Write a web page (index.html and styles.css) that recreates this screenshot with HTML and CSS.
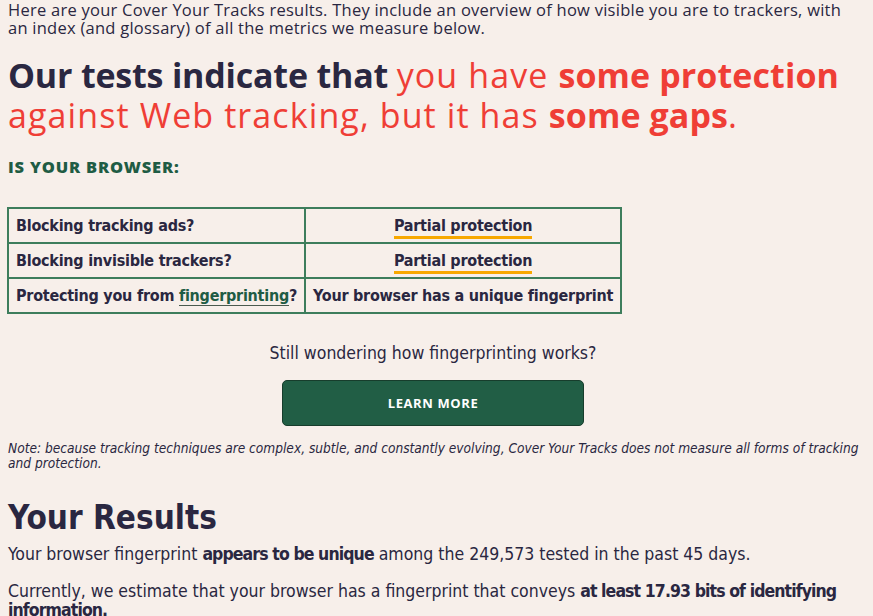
FILE: index.html
```html
<!DOCTYPE html>
<html lang="en">
<head>
<meta charset="utf-8">
<title>Cover Your Tracks</title>
<link rel="stylesheet" href="styles.css">
</head>
<body>
<main class="page">
  <p class="intro">Here are your Cover Your Tracks results. They include an overview of how visible you are to trackers, with an index (and glossary) of all the metrics we measure below.</p>
  <h1 class="verdict">Our tests indicate that <span class="red">you have <strong>some protection</strong> against Web tracking, but it has <strong>some gaps</strong>.</span></h1>
  <h3 class="kicker">IS YOUR BROWSER:</h3>
  <table class="summary">
    <tr><td class="q">Blocking tracking ads?</td><td class="a"><span class="partial">Partial protection</span></td></tr>
    <tr><td class="q">Blocking invisible trackers?</td><td class="a"><span class="partial">Partial protection</span></td></tr>
    <tr><td class="q">Protecting you from <a class="link" href="#">fingerprinting</a>?</td><td class="a">Your browser has a unique fingerprint</td></tr>
  </table>
  <div class="learn">
    <p class="wonder">Still wondering how fingerprinting works?</p>
    <a class="btn" href="#">LEARN MORE</a>
  </div>
  <p class="note">Note: because tracking techniques are complex, subtle, and constantly evolving, Cover Your Tracks does not measure all forms of tracking and protection.</p>
  <h2 class="results">Your Results</h2>
  <p class="body">Your browser fingerprint <strong>appears to be unique</strong> among the 249,573 tested in the past 45 days.</p>
  <p class="body second">Currently, we estimate that your browser has a fingerprint that conveys <strong>at least 17.93 bits of identifying information.</strong></p>
</main>
</body>
</html>
```
FILE: styles.css
```css
html, body {
  margin: 0;
  padding: 0;
  background: #f7efea;
  color: #2a2741;
}
.page {
  padding: 0 8px;
  font-family: "DejaVu Sans Condensed", "DejaVu Sans", sans-serif;
  font-stretch: condensed;
}
.intro {
  margin: 0;
  padding-top: 1px;
  font-family: "Open Sans", "Noto Sans", sans-serif;
  font-stretch: normal;
  font-size: 16.5px;
  letter-spacing: 0.25px;
  line-height: 18px;
  color: #2a2741;
}
.verdict {
  margin: 18px 0 0;
  font-family: "Open Sans", "Noto Sans", sans-serif;
  font-stretch: normal;
  font-size: 34px;
  letter-spacing: -0.2px;
  line-height: 40px;
  font-weight: 700;
  color: #2a2741;
}
.red {
  color: #ef3e36;
  font-weight: 400;
  letter-spacing: 1.1px;
}
.red strong {
  font-weight: 700;
  letter-spacing: 0.1px;
}
.kicker {
  margin: 22px 0 0;
  font-family: "Open Sans", "Noto Sans", sans-serif;
  font-stretch: normal;
  font-size: 16.5px;
  letter-spacing: 0.8px;
  line-height: 20px;
  font-weight: 800;
  color: #1f5c44;
}
.summary {
  margin: 30px 0 0 -1px;
  border-collapse: collapse;
  border: 2px solid #3d7d5c;
}
.summary td {
  border: 2px solid #3d7d5c;
  height: 33px;
  padding: 0 7px;
  font-size: 16px;
  font-weight: 700;
  letter-spacing: -0.25px;
  white-space: nowrap;
  color: #2a2741;
}
.summary td.q { width: 281px; }
.summary td.a { width: 300px; text-align: center; }
.partial {
  border-bottom: 3px solid #f7a800;
  padding-bottom: 1px;
}
.link {
  color: #1f5c44;
  text-decoration: none;
  border-bottom: 1px solid #4a5a4e;
}
.learn {
  display: flex;
  flex-direction: column;
  align-items: center;
  padding-right: 7px;
}
.wonder {
  margin: 29px 0 0;
  font-size: 17.5px;
  line-height: 20px;
  color: #2a2741;
}
.btn {
  margin-top: 17px;
  width: 300px;
  height: 44px;
  display: flex;
  align-items: center;
  justify-content: center;
  background: #215e45;
  border: 1px solid #173d2c;
  border-radius: 5px;
  color: #fff;
  text-decoration: none;
  font-family: "Open Sans", "Noto Sans", sans-serif;
  font-stretch: normal;
  font-weight: 700;
  font-size: 13px;
  letter-spacing: 0.6px;
}
.note {
  margin: 15px 0 0;
  font-style: italic;
  font-size: 13.6px;
  line-height: 15px;
  color: #2a2741;
}
.results {
  margin: 25px 0 0;
  font-size: 33px;
  line-height: 44px;
  font-weight: 700;
  color: #2a2741;
}
.body {
  margin: 5px 0 0;
  font-size: 17.5px;
  line-height: 19px;
  color: #2a2741;
}
.body strong {
  letter-spacing: -0.9px;
}
.body.second { margin-top: 18px; }
```
